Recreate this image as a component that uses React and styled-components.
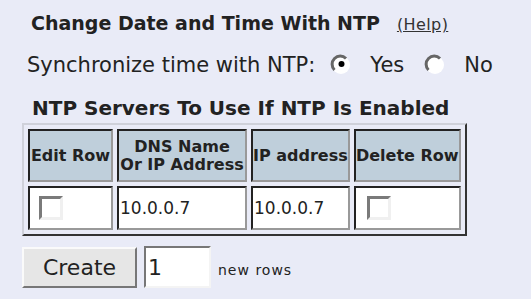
import styled, { createGlobalStyle } from 'styled-components';

const GlobalStyle = createGlobalStyle`
  html, body {
    margin: 0;
    padding: 0;
    background: #e9ebf7;
    font-family: "DejaVu Sans", Verdana, sans-serif;
    color: #222;
  }
`

const Page = styled.div`
  width: 531px;
  height: 299px;
  box-sizing: border-box;
  padding: 11px 0 0 22px;
  overflow: hidden;
`

const TitleRow = styled.div`
  display: flex;
  align-items: baseline;
  gap: 17px;
  padding-left: 9px;
  height: 39px;
  line-height: 24px;
`

const Title = styled.h1`
  margin: 0;
  font-size: 19px;
  font-weight: bold;
`

const Help = styled.a`
  font-size: 16px;
  letter-spacing: 0.4px;
  color: #333;
  text-decoration: underline;
`

const SyncRow = styled.div`
  display: flex;
  align-items: center;
  font-size: 21px;
  line-height: 30px;
  height: 30px;
  padding-left: 5px;
`

const Choice = styled.label`
  display: flex;
  align-items: center;
  gap: 18px;
  margin-left: ${p => p.$gap}px;
`

const SubTitle = styled.h2`
  margin: 15px 0 0 10px;
  font-size: 20px;
  line-height: 26px;
  font-weight: bold;
`

const Table = styled.table`
  border-collapse: separate;
  border-spacing: 4px;
  border: 2px solid;
  border-color: #cfd1da #333 #333 #cfd1da;
  margin-top: 2px;
`

const Th = styled.th`
  background: #bfcfdb;
  border: 2px solid;
  border-color: #222 #999 #999 #222;
  font-size: 16px;
  font-weight: bold;
  white-space: nowrap;
  height: 49px;
  padding: 0;
  line-height: 18px;
  width: ${p => p.$w}px;
`

const Td = styled.td`
  background: #fff;
  border: 2px solid;
  border-color: #222 #999 #999 #222;
  font-size: 17px;
  height: 40px;
  padding: 0 1px;
`

const Check = styled.span`
  display: block;
  width: 18px;
  height: 18px;
  border: 3px solid;
  border-color: #7a7a7a #f0f0f0 #f0f0f0 #7a7a7a;
  background: #fff;
  margin-left: ${p => p.$shift}px;
`

const Footer = styled.div`
  display: flex;
  align-items: center;
  margin-top: 10px;
`

const Button = styled.button`
  font-family: "DejaVu Sans", Verdana, sans-serif;
  font-size: 22px;
  color: #222;
  background: #e6e6e6;
  border: 2px solid;
  border-color: #fafafa #777 #777 #fafafa;
  width: 115px;
  height: 41px;
  padding: 0;
`

const Count = styled.input`
  font-family: "DejaVu Sans", Verdana, sans-serif;
  font-size: 22px;
  color: #222;
  width: 67px;
  height: 42px;
  box-sizing: border-box;
  margin-left: 7px;
  border: 2px solid;
  border-color: #777 #f4f4f4 #f4f4f4 #777;
  padding: 0 2px;
  background: #fff;
`

const Note = styled.span`
  font-size: 14px;
  letter-spacing: 1px;
  margin-left: 7px;
  margin-top: 6px;
`

function Radio({ checked }) {
  return (
    <svg width="22" height="22" viewBox="0 0 22 22">
      <circle cx="11" cy="11" r="9" fill="#fff" />
      <path d="M4.5 16 A8 8 0 0 1 16 4.5" stroke="#666" strokeWidth="3" fill="none" />
      {checked && <circle cx="11.5" cy="10" r="3" fill="#000" />}
    </svg>
  )
}

export default function App() {
  return (
    <>
      <GlobalStyle />
      <Page>
        <TitleRow>
          <Title>Change Date and Time With NTP</Title>
          <Help href="#">(Help)</Help>
        </TitleRow>
        <SyncRow>
          Synchronize time with NTP:
          <Choice $gap={15}><Radio checked /> Yes</Choice>
          <Choice $gap={20}><Radio /> No</Choice>
        </SyncRow>
        <SubTitle>NTP Servers To Use If NTP Is Enabled</SubTitle>
        <Table>
          <thead>
            <tr>
              <Th $w={81}>Edit Row</Th>
              <Th $w={126}>DNS Name<br />Or IP Address</Th>
              <Th $w={94}>IP address</Th>
              <Th $w={103}>Delete Row</Th>
            </tr>
          </thead>
          <tbody>
            <tr>
              <Td><Check $shift={8} /></Td>
              <Td>10.0.0.7</Td>
              <Td>10.0.0.7</Td>
              <Td><Check $shift={10} /></Td>
            </tr>
          </tbody>
        </Table>
        <Footer>
          <Button>Create</Button>
          <Count defaultValue="1" />
          <Note>new rows</Note>
        </Footer>
      </Page>
    </>
  )
}
